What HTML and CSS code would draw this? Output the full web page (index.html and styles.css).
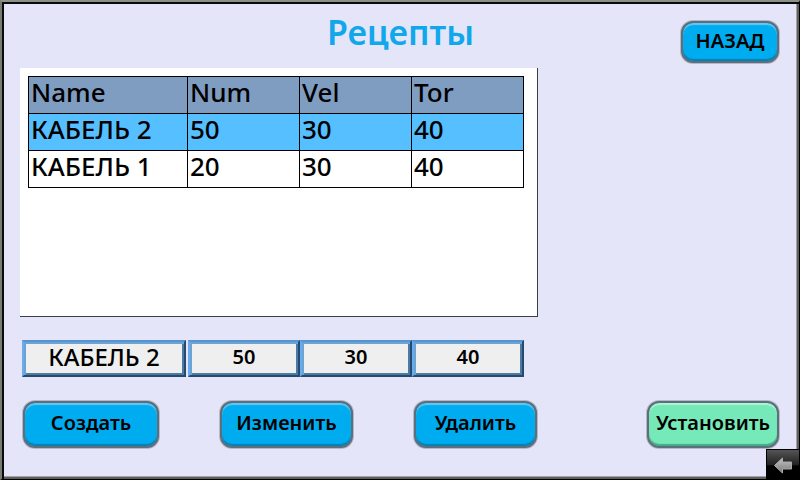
FILE: index.html
```
<!DOCTYPE html>
<html lang="ru">
<head>
<meta charset="utf-8">
<meta name="viewport" content="width=device-width, initial-scale=1">
<title>Рецепты</title>
<link rel="stylesheet" href="styles.css">
</head>
<body>
<main class="screen">
  <header class="header">
    <h1 class="title">Рецепты</h1>
    <button class="btn btn-back" type="button">НАЗАД</button>
  </header>
  <section class="panel">
    <table class="recipes">
      <thead>
        <tr><th class="name" scope="col">Name</th><th scope="col">Num</th><th scope="col">Vel</th><th scope="col">Tor</th></tr>
      </thead>
      <tbody>
        <tr class="selected"><td>КАБЕЛЬ 2</td><td>50</td><td>30</td><td>40</td></tr>
        <tr><td>КАБЕЛЬ 1</td><td>20</td><td>30</td><td>40</td></tr>
      </tbody>
    </table>
  </section>
  <form class="fields">
    <input class="field field-name" type="text" aria-label="Name" value="КАБЕЛЬ 2">
    <input class="field" type="text" aria-label="Num" value="50">
    <input class="field" type="text" aria-label="Vel" value="30">
    <input class="field" type="text" aria-label="Tor" value="40">
  </form>
  <footer class="actions">
    <div class="edit">
      <button class="btn" type="button">Создать</button>
      <button class="btn" type="button">Изменить</button>
      <button class="btn" type="button">Удалить</button>
    </div>
    <button class="btn btn-apply" type="button">Установить</button>
  </footer>
  <button class="corner" type="button" aria-label="Назад">
    <svg viewBox="0 0 32 30" width="32" height="30" aria-hidden="true">
      <defs>
        <linearGradient id="arrow" x1="0" y1="0" x2="0" y2="1">
          <stop offset="0" stop-color="#c4c4c4"/>
          <stop offset="1" stop-color="#777"/>
        </linearGradient>
      </defs>
      <path d="M7.5 15.5 15.5 8v4h9v7h-9v4z" fill="url(#arrow)" stroke="#aaa" stroke-width="1"/>
    </svg>
  </button>
</main>
</body>
</html>
```
FILE: styles.css
```
* {
  box-sizing: border-box;
}

body {
  margin: 0;
  font-family: "Noto Sans", "Open Sans", sans-serif;
  color: #000;
}

.screen {
  position: relative;
  display: flex;
  flex-direction: column;
  min-height: 100vh;
  padding: 10px 18px 30px;
  background: #e4e5f9;
  border: solid;
  border-color: #8c9088 #000 #000 #777b74;
  border-width: 2px 1px 1px 2px;
  box-shadow: inset 2px 2px #080a0c, inset -2px -2px #5c5e5a,
    inset -3px -3px #a4a4a8;
}

.header {
  display: grid;
  grid-template-columns: 1fr auto 1fr;
  height: 56px;
}

.title {
  grid-column: 2;
  margin: 0;
  font-size: 34px;
  line-height: 40px;
  font-weight: 600;
  color: #10a8ea;
}

.btn {
  height: 47px;
  padding: 0 0 4px;
  font: 600 20px/24px "Noto Sans", "Open Sans", sans-serif;
  color: #000;
  background: #00acf0;
  border: 2px solid #5b6f7c;
  border-radius: 12px;
  box-shadow: 0 0 0 1px #b9b7c6,
    inset 0 2px 1px #62c8f3, inset 0 -2px 1px #087fb3;
}

.btn-back {
  grid-column: 3;
  justify-self: end;
  width: 98px;
  height: 42px;
  margin: 9px 2px 0 0;
  padding-bottom: 2px;
}

.panel {
  width: 518px;
  min-height: 249px;
  padding: 8px 7px;
  background: #fff;
  border: solid #3d3d48;
  border-width: 0 1px 1px 0;
}

.recipes {
  width: 496px;
  margin-left: 1px;
  table-layout: fixed;
  border-collapse: collapse;
  font-size: 26px;
  line-height: 30px;
  font-weight: 500;
}

.recipes th,
.recipes td {
  height: 37px;
  padding: 0 2px 6px;
  border: 1px solid #000;
  text-align: left;
  font-weight: 500;
}

.recipes .name {
  width: 159px;
}

.recipes th {
  background: #7f9dc0;
}

.selected {
  background: #56bfff;
}

.fields {
  display: grid;
  grid-template-columns: 166px repeat(3, 112px);
  margin: 23px 0 0 2px;
}

.field {
  width: 100%;
  height: 37px;
  padding: 0 0 4px;
  font: 600 20px/24px "Noto Sans", "Open Sans", sans-serif;
  color: #000;
  text-align: center;
  background: #efefef;
  border: 2px solid;
  border-color: #5795d2 #27496b #27496b #69aaf0;
  border-radius: 0;
  box-shadow: inset 2px 2px #6ba3d3, inset -2px -2px #4a7ba5;
}

.field-name {
  width: 164px;
  font-size: 24px;
  font-weight: 500;
}

.actions {
  display: flex;
  justify-content: space-between;
  margin-top: 24px;
  padding: 0 2px 0 3px;
}

.edit {
  display: grid;
  grid-template-columns: 136px 133px 123px;
  gap: 61px;
}

.btn-apply {
  width: 132px;
  background: #75e9b8;
  box-shadow: 0 0 0 1px #b9b7c6,
    inset 0 2px 1px #aff4d7, inset 0 -2px 1px #43a984;
}

.corner {
  position: absolute;
  right: -1px;
  bottom: -1px;
  width: 34px;
  height: 31px;
  padding: 0;
  border: 1px solid #000;
  background: linear-gradient(#555, #222 50%, #000 55%);
}

.corner svg {
  display: block;
}
```
